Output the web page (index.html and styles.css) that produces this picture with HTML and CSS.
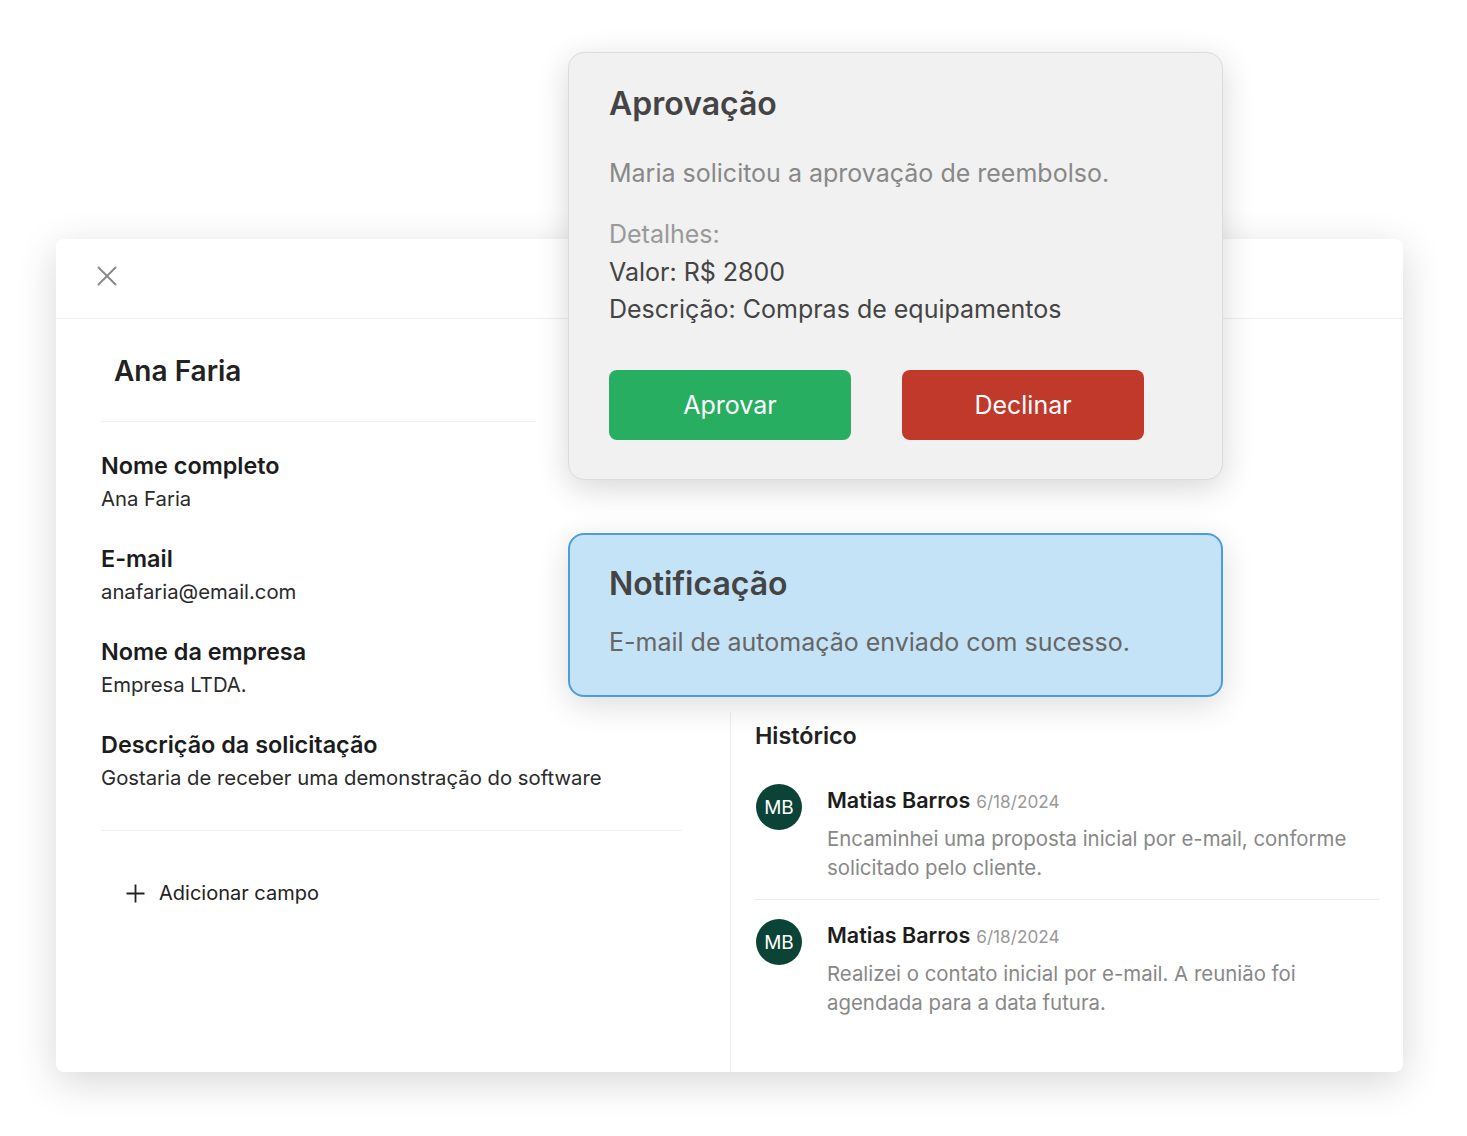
FILE: index.html
```html
<!DOCTYPE html>
<html lang="pt-BR">
<head>
    <meta charset="UTF-8">
    <meta name="viewport" content="width=device-width, initial-scale=1.0">
    <title>Solicitação - Ana Faria</title>
    <link rel="stylesheet" href="styles.css">
</head>
<body>
    <div class="stage">
        <div class="card">
            <div class="card-header">
                <button class="close" aria-label="Fechar">
                    <svg width="20" height="20" viewBox="0 0 20 20">
                        <path d="M1 1 L19 19 M19 1 L1 19" stroke="#8a8a8a" stroke-width="2" fill="none"/>
                    </svg>
                </button>
            </div>
            <div class="card-body">
                <div class="details">
                    <h2 class="contact-name">Ana Faria</h2>

                    <div class="field">
                        <div class="field-label">Nome completo</div>
                        <div class="field-value">Ana Faria</div>
                    </div>
                    <div class="field">
                        <div class="field-label">E-mail</div>
                        <div class="field-value">anafaria@email.com</div>
                    </div>
                    <div class="field">
                        <div class="field-label">Nome da empresa</div>
                        <div class="field-value">Empresa LTDA.</div>
                    </div>
                    <div class="field">
                        <div class="field-label">Descrição da solicitação</div>
                        <div class="field-value">Gostaria de receber uma demonstração do software</div>
                    </div>

                    <div class="add-field">
                        <svg width="19" height="19" viewBox="0 0 19 19">
                            <path d="M9.5 0.5 V18.5 M0.5 9.5 H18.5" stroke="#222" stroke-width="1.8" fill="none"/>
                        </svg>
                        <span>Adicionar campo</span>
                    </div>
                </div>

                <div class="side">
                    <div class="history">
                        <h3>Histórico</h3>
                        <div class="entry">
                            <div class="avatar">MB</div>
                            <div class="entry-content">
                                <div class="entry-head"><strong>Matias Barros</strong> <span class="date">6/18/2024</span></div>
                                <p>Encaminhei uma proposta inicial por e-mail, conforme solicitado pelo cliente.</p>
                            </div>
                        </div>
                        <div class="entry">
                            <div class="avatar">MB</div>
                            <div class="entry-content">
                                <div class="entry-head"><strong>Matias Barros</strong> <span class="date">6/18/2024</span></div>
                                <p>Realizei o contato inicial por e-mail. A reunião foi agendada para a data futura.</p>
                            </div>
                        </div>
                    </div>
                </div>
            </div>
        </div>

        <div class="approval">
            <h2>Aprovação</h2>
            <p class="approval-text">Maria solicitou a aprovação de reembolso.</p>
            <div class="approval-details">
                <div class="muted">Detalhes:</div>
                <div>Valor: R$ 2800</div>
                <div>Descrição: Compras de equipamentos</div>
            </div>
            <div class="actions">
                <button class="btn btn-approve">Aprovar</button>
                <button class="btn btn-decline">Declinar</button>
            </div>
        </div>

        <div class="notification">
            <h2>Notificação</h2>
            <p>E-mail de automação enviado com sucesso.</p>
        </div>
    </div>
</body>
</html>
```

FILE: styles.css
```css
body {
    font-family: Inter, "Noto Sans", sans-serif;
    background-color: #fff;
    margin: 0;
    color: #222;
}

.stage {
    position: relative;
    padding: 239px 0 0 56px;
    height: 897px;
}

.card {
    width: 1347px;
    height: 833px;
    background-color: #fff;
    border-radius: 8px;
    box-shadow: 0 10px 40px rgba(0, 0, 0, 0.16);
    display: flex;
    flex-direction: column;
    overflow: hidden;
}

.card-header {
    height: 79px;
    border-bottom: 1px solid #efefef;
    display: flex;
    align-items: center;
    padding-left: 41px;
}

.close {
    background: none;
    border: none;
    padding: 0;
    width: 20px;
    height: 20px;
    margin-top: -6px;
    cursor: pointer;
}

.card-body {
    flex: 1;
    display: grid;
    grid-template-columns: 674px 1fr;
}

.details {
    padding-left: 45px;
}

.contact-name {
    margin: 0;
    width: 435px;
    box-sizing: border-box;
    padding: 35px 0 33px 13px;
    font-size: 28px;
    line-height: 34px;
    font-weight: 600;
    border-bottom: 1px solid #efefef;
}

.field {
    margin-top: 28px;
}

.field + .field {
    margin-top: 26px;
}

.field-label {
    font-size: 23.4px;
    line-height: 31px;
    font-weight: 600;
    color: #1c1c1c;
}

.field-value {
    font-size: 20.3px;
    line-height: 36px;
    color: #2a2a2a;
}

.add-field {
    width: 581px;
    box-sizing: border-box;
    margin-top: 34px;
    border-top: 1px solid #efefef;
    padding: 47px 0 0 25px;
    display: flex;
    align-items: center;
    gap: 14px;
    font-size: 20px;
    line-height: 30px;
    color: #222;
}

.side {
    padding-top: 393px;
    display: flex;
    flex-direction: column;
}

.history {
    flex: 1;
    border-left: 1px solid #ececec;
    padding: 9px 23px 0 24px;
}

.history h3 {
    margin: 0 0 13px;
    font-size: 23.3px;
    line-height: 30px;
    font-weight: 600;
}

.entry {
    display: flex;
    gap: 25px;
    padding: 22px 0 17px;
}

.entry + .entry {
    border-top: 1px solid #ececec;
    padding-top: 21px;
}

.avatar {
    width: 46px;
    height: 46px;
    flex-shrink: 0;
    margin: -2px 0 0 1px;
    border-radius: 50%;
    background-color: #0b4437;
    color: #fff;
    font-size: 19px;
    display: flex;
    align-items: center;
    justify-content: center;
}

.entry-head {
    font-size: 21.5px;
    line-height: 28px;
}

.entry-head strong {
    font-weight: 600;
    color: #1c1c1c;
}

.date {
    font-size: 17.2px;
    color: #999;
}

.entry p {
    margin: 8px 0 0;
    font-size: 20.4px;
    line-height: 29px;
    color: #888;
}

.approval {
    position: absolute;
    left: 568px;
    top: 52px;
    width: 655px;
    height: 428px;
    box-sizing: border-box;
    padding: 31px 0 0 40px;
    background-color: #f1f1f1;
    border: 1px solid #dcdcdc;
    border-radius: 16px;
    box-shadow: 0 8px 32px rgba(0, 0, 0, 0.16);
}

.approval h2,
.notification h2 {
    margin: 0;
    font-size: 32px;
    line-height: 40px;
    font-weight: 600;
    color: #444;
}

.approval-text {
    margin: 33px 0 0;
    font-size: 25px;
    line-height: 32px;
    color: #888;
}

.approval-details {
    margin-top: 27px;
    font-size: 25px;
    line-height: 37.5px;
    color: #444;
}

.approval-details .muted {
    color: #999;
}

.actions {
    display: flex;
    gap: 51px;
    margin-top: 41px;
}

.btn {
    width: 242px;
    height: 70px;
    border: none;
    border-radius: 8px;
    color: #fff;
    font-family: inherit;
    font-size: 25px;
    cursor: pointer;
}

.btn-approve {
    background-color: #27ae60;
}

.btn-decline {
    background-color: #c0392b;
}

.notification {
    position: absolute;
    left: 568px;
    top: 533px;
    width: 655px;
    height: 164px;
    box-sizing: border-box;
    padding: 29px 0 0 39px;
    background-color: #c5e3f6;
    border: 2px solid #4a9ee0;
    border-radius: 16px;
    box-shadow: 0 8px 32px rgba(0, 0, 0, 0.14);
}

.notification p {
    margin: 22px 0 0;
    font-size: 25px;
    line-height: 32px;
    color: #666;
}
```
